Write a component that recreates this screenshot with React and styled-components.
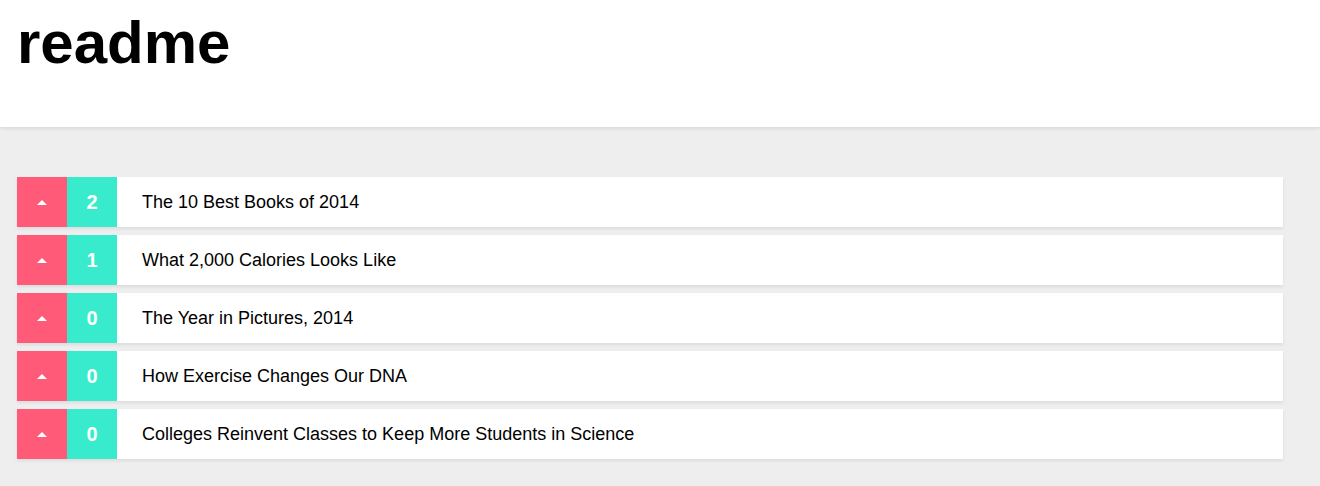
import React from 'react';
import styled, {createGlobalStyle} from 'styled-components';

const GlobalStyle = createGlobalStyle`
  body {
    margin: 0;
    background: #eeeeee;
    font-family: "Liberation Sans", Arial, sans-serif;
  }
`;

const posts = [
    {id: 1, votes: 2, title: 'The 10 Best Books of 2014'},
    {id: 2, votes: 1, title: 'What 2,000 Calories Looks Like'},
    {id: 3, votes: 0, title: 'The Year in Pictures, 2014'},
    {id: 4, votes: 0, title: 'How Exercise Changes Our DNA'},
    {id: 5, votes: 0, title: 'Colleges Reinvent Classes to Keep More Students in Science'},
];

export default function App() {
    return (
        <>
            <GlobalStyle/>
            <Header>
                <Title>readme</Title>
            </Header>
            <List>
                {posts.map((p) => (
                    <Row key={p.id}>
                        <Vote>
                            <Arrow/>
                        </Vote>
                        <Count>{p.votes}</Count>
                        <PostTitle>{p.title}</PostTitle>
                    </Row>
                ))}
            </List>
        </>
    );
}

const Header = styled.header`
  background: #fff;
  height: 127px;
  padding: 0 17px;
  box-sizing: border-box;
  box-shadow: 0 1px 4px rgba(0, 0, 0, 0.12);
  position: relative;
`;

const Title = styled.h1`
  margin: 0;
  padding-top: 8px;
  font-size: 60px;
  font-weight: bold;
  line-height: 70px;
  color: #000;
`;

const List = styled.main`
  padding: 50px 37px 20px 17px;
  display: flex;
  flex-direction: column;
  gap: 8px;
`;

const Row = styled.div`
  display: flex;
  align-items: center;
  height: 50px;
  background: #fff;
  box-shadow: 0 2px 3px rgba(0, 0, 0, 0.08);
`;

const Vote = styled.div`
  width: 50px;
  height: 100%;
  background: #ff5a78;
  display: flex;
  align-items: center;
  justify-content: center;
`;

const Arrow = styled.span`
  width: 0;
  height: 0;
  border-left: 5px solid transparent;
  border-right: 5px solid transparent;
  border-bottom: 5px solid #fff;
`;

const Count = styled.div`
  width: 50px;
  height: 100%;
  background: #38ebcc;
  color: #fff;
  font-weight: bold;
  font-size: 20px;
  display: flex;
  align-items: center;
  justify-content: center;
`;

const PostTitle = styled.span`
  padding-left: 25px;
  font-size: 18px;
  color: #000;
`;
